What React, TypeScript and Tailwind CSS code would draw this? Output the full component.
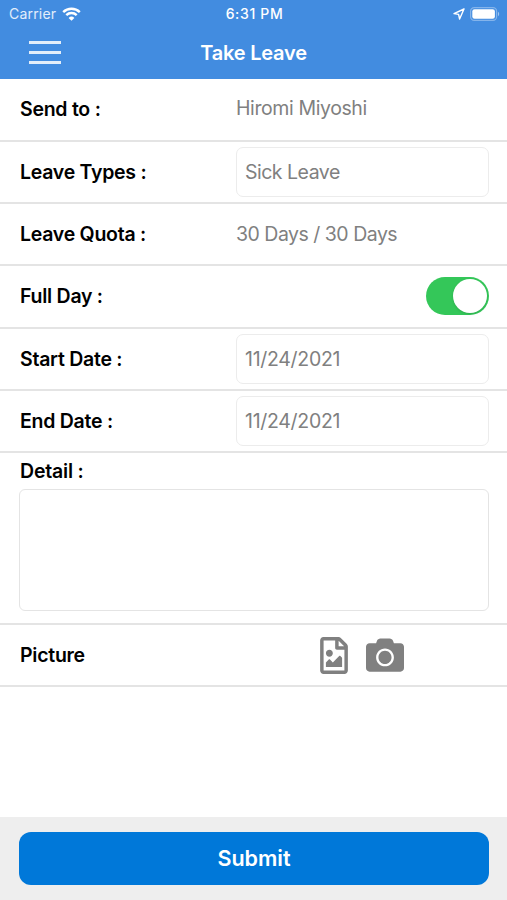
import { useState } from 'react';
import type { ReactNode } from 'react';
import { FaCamera, FaRegFileImage } from 'react-icons/fa';
import { cx } from 'class-variance-authority';

interface RowProps {
  label: string;
  className?: string;
  children?: ReactNode;
}

function Row({ label, className, children }: RowProps) {
  return (
    <div className={cx('flex shrink-0 items-center border-b-2 border-[#e4e4e4] pr-[18px] pl-5', className)}>
      <span className="w-[216px] shrink-0 font-semibold tracking-[-0.26px] text-black">{label}</span>
      {children}
    </div>
  );
}

function Field({ value, className }: { value: string; className?: string }) {
  return (
    <button
      type="button"
      className={cx('flex h-[50px] flex-1 items-center rounded-[7px] border border-[#ececec] bg-white pl-2 text-left text-[#808080]', className)}
    >
      {value}
    </button>
  );
}

function StatusBar() {
  return (
    <div className="grid h-7 grid-cols-3 items-center pr-[7px] pl-[9px] text-[14px] leading-none text-white">
      <div className="flex items-center gap-[6px]">
        <span className="tracking-[0.2px] text-white/85">Carrier</span>
        <svg width="19" height="14" viewBox="0 0 19 14" fill="none" stroke="currentColor" strokeWidth="2.4">
          <path d="M1.2 5.1a11.8 11.8 0 0 1 16.6 0" />
          <path d="M4.3 8.2a7.4 7.4 0 0 1 10.4 0" />
          <path d="M9.5 13.8 6.6 10.9a4.1 4.1 0 0 1 5.8 0z" fill="currentColor" stroke="none" />
        </svg>
      </div>
      <span className="text-center font-medium tracking-[0.65px]">6:31 PM</span>
      <div className="flex items-center justify-end gap-[5px]">
        <svg width="12" height="12" viewBox="0 0 12 12" fill="none" stroke="currentColor" strokeWidth="1.4" strokeLinejoin="round">
          <path d="M11 1 1 5.6l4.6.8L6.6 11z" />
        </svg>
        <svg width="30" height="14" viewBox="0 0 30 14" fill="none">
          <rect x="0.6" y="0.6" width="26" height="12.8" rx="3.6" stroke="white" strokeOpacity="0.35" strokeWidth="1.2" />
          <rect x="2.3" y="2.3" width="22.6" height="9.4" rx="2.2" fill="white" />
          <path d="M28 4.8a2.6 2.6 0 0 1 0 4.4z" fill="white" fillOpacity="0.5" />
        </svg>
      </div>
    </div>
  );
}

export default function App() {
  const [fullDay, setFullDay] = useState(true);
  const [detail, setDetail] = useState('');

  return (
    <div className="flex h-[900px] w-[507px] flex-col bg-white font-['Inter','Liberation_Sans',sans-serif] text-[19.5px] leading-6">
      <header className="h-[79px] shrink-0 bg-[#428ce0]">
        <StatusBar />
        <div className="grid h-12 grid-cols-[80px_1fr_80px] items-center">
          <button type="button" className="mr-[19px] flex w-8 flex-col gap-[7px] justify-self-end">
            <span className="h-[3px] bg-white/85" />
            <span className="h-[3px] bg-white/85" />
            <span className="h-[3px] bg-white/85" />
          </button>
          <h1 className="pt-px text-center text-[20px] font-semibold tracking-[-0.2px] text-white">Take Leave</h1>
        </div>
      </header>

      <main className="flex flex-1 flex-col">
        <Row label="Send to :" className="h-[63px] pb-px">
          <span className="pb-[2px] tracking-[-0.4px] text-[#808080]">Hiromi Miyoshi</span>
        </Row>
        <Row label="Leave Types :" className="h-[62px]">
          <Field value="Sick Leave" className="tracking-[-0.5px]" />
        </Row>
        <Row label="Leave Quota :" className="h-[62px]">
          <span className="tracking-[-0.5px] text-[#808080]">30 Days / 30 Days</span>
        </Row>
        <Row label="Full Day :" className="h-[63px] pb-px">
          <button
            type="button"
            role="switch"
            aria-checked={fullDay}
            onClick={() => setFullDay(!fullDay)}
            className={cx('ml-auto flex h-[38px] w-[63px] items-center rounded-full px-[2px]', fullDay ? 'justify-end bg-[#34c759]' : 'bg-[#e9e9ea]')}
          >
            <span className="size-[34px] rounded-full bg-white shadow-sm" />
          </button>
        </Row>
        <Row label="Start Date :" className="h-[62px]">
          <Field value="11/24/2021" className="tracking-[-0.3px]" />
        </Row>
        <Row label="End Date :" className="h-[62px]">
          <Field value="11/24/2021" className="tracking-[-0.3px]" />
        </Row>

        <div className="flex h-[172px] shrink-0 flex-col border-b-2 border-[#e4e4e4] pt-[6px] pr-[18px] pl-[19px]">
          <label htmlFor="detail" className="mb-[6px] pl-px font-semibold tracking-[-0.2px]">
            Detail :
          </label>
          <textarea
            id="detail"
            value={detail}
            onChange={(e) => setDetail(e.target.value)}
            className="h-[122px] w-full resize-none rounded-md border-[1.5px] border-[#e4e4e4] p-2 outline-none"
          />
        </div>

        <Row label="Picture" className="h-[62px]">
          <div className="ml-[84px] flex items-center gap-[18px] text-[#808080]">
            <FaRegFileImage className="h-[37px] w-[28px]" />
            <FaCamera className="size-[38px]" />
          </div>
        </Row>
      </main>

      <footer className="h-[83px] shrink-0 bg-[#eeeeee] pt-[15px] pr-[18px] pl-[19px]">
        <button type="button" className="h-[53px] w-full rounded-xl bg-[#0078d9] pb-px text-[21.5px] font-semibold text-white">
          Submit
        </button>
      </footer>
    </div>
  );
}
